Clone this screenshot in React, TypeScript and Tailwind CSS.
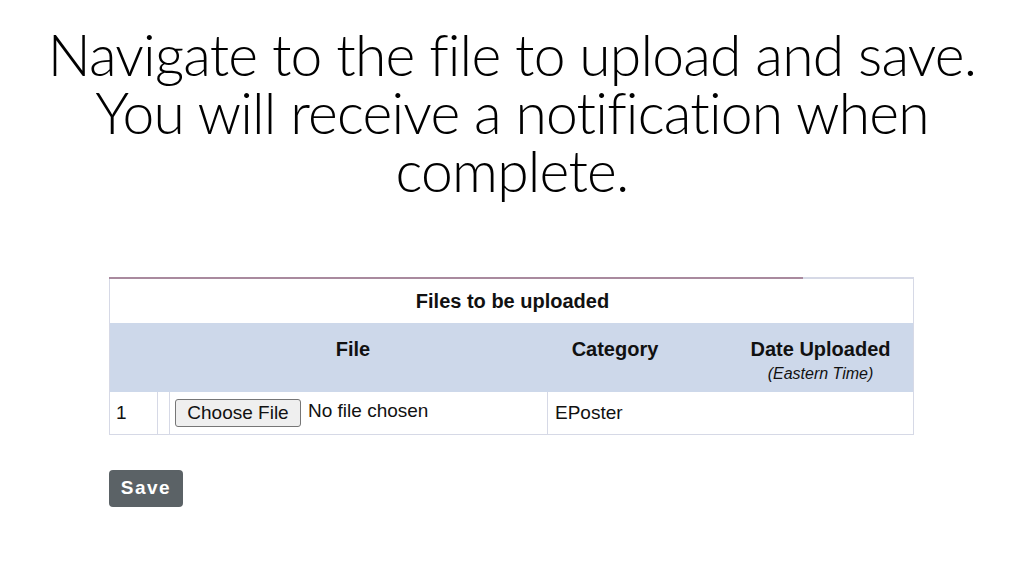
import React from "react";

const cell = "flex items-center";

export default function App() {
  return (
    <div className="w-[1024px] h-[576px] bg-white overflow-hidden">
      <h1
        className="pt-[25px] text-center text-[57px] leading-[58px] font-light text-black tracking-[-0.8px]"
        style={{ fontFamily: "Lato, 'Open Sans', sans-serif" }}
      >
        Navigate to the file to upload and save.
        <br />
        You will receive a notification when
        <br />
        complete.
      </h1>

      <div
        className="ml-[109px] mt-[78px] w-[805px] text-[19px] text-[#111]"
        style={{ fontFamily: "'Liberation Sans', Arial, sans-serif" }}
      >
        <div className="flex h-[2px]">
          <div className="w-[694px] bg-[#a98a9e]" />
          <div className="flex-1 bg-[#d6d9e6]" />
        </div>
        <div className="border-x border-b border-[#d6d9e6]">
          <div className="h-[44px] flex items-center justify-center font-bold text-[20px] pl-[2px]">
            Files to be uploaded
          </div>
          <div className="grid grid-cols-[48px_390px_134px_1fr] h-[69px] bg-[#cdd8ea] font-bold text-[20px]">
            <div />
            <div className="flex justify-center pt-[11px]">File</div>
            <div className="flex justify-center pt-[11px]">Category</div>
            <div className="flex flex-col items-center pt-[11px] pl-[46px]">
              <span>Date Uploaded</span>
              <span className="text-[16px] font-normal italic leading-[20px]">
                (Eastern Time)
              </span>
            </div>
          </div>
          <div className="grid grid-cols-[48px_12px_378px_134px_1fr] h-[42px]">
            <div className={`${cell} pl-[6px] border-r border-[#d6d9e6]`}>1</div>
            <div className="border-r border-[#d6d9e6]" />
            <div className={`${cell} pl-[5px] border-r border-[#d6d9e6]`}>
              <span className="h-[28px] w-[126px] flex items-center justify-center border border-[#767676] rounded-[3px] bg-[#efefef] text-[19px]">
                Choose File
              </span>
              <span className="ml-[7px] -mt-[3px]">No file chosen</span>
            </div>
            <div className={`${cell} pl-[7px]`}>EPoster</div>
            <div />
          </div>
        </div>
      </div>

      <button
        className="ml-[109px] mt-[35px] w-[74px] h-[37px] rounded-[4px] bg-[#5b6266] text-white text-[19px] font-bold tracking-[1.5px] flex items-center justify-center"
        style={{ fontFamily: "'Liberation Sans', Arial, sans-serif" }}
      >
        Save
      </button>
    </div>
  );
}
